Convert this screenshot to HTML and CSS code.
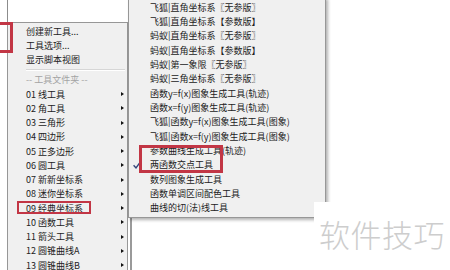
FILE: index.html
```html
<!DOCTYPE html>
<html lang="zh-CN">
<head>
  <meta charset="UTF-8">
  <title>工具菜单</title>
  <link rel="stylesheet" href="styles.css">
</head>
<body>
  <div class="desk">
    <!-- windows behind the menus -->
    <div class="backwin back-left"></div>
    <div class="backwin back-bottom"></div>

    <div class="menu menu-main">
      <div class="item">创建新工具...</div>
      <div class="item">工具选项...</div>
      <div class="item">显示脚本视图</div>
      <div class="sep"></div>
      <div class="item disabled">-- 工具文件夹 --</div>
      <div class="item">01 线工具<span class="arrow"></span></div>
      <div class="item">02 角工具<span class="arrow"></span></div>
      <div class="item">03 三角形<span class="arrow"></span></div>
      <div class="item">04 四边形<span class="arrow"></span></div>
      <div class="item">05 正多边形<span class="arrow"></span></div>
      <div class="item">06 圆工具<span class="arrow"></span></div>
      <div class="item">07 新新坐标系<span class="arrow"></span></div>
      <div class="item">08 迷你坐标系<span class="arrow"></span></div>
      <div class="item">09 经典坐标系<span class="arrow"></span></div>
      <div class="item">10 函数工具<span class="arrow"></span></div>
      <div class="item">11 箭头工具<span class="arrow"></span></div>
      <div class="item">12 圆锥曲线A<span class="arrow"></span></div>
      <div class="item">13 圆锥曲线B<span class="arrow"></span></div>
    </div>

    <div class="menu menu-sub">
      <div class="item">飞狐|直角坐标系〖无参版〗</div>
      <div class="item">飞狐|直角坐标系【参数版】</div>
      <div class="item">蚂蚁|直角坐标系〖无参版〗</div>
      <div class="item">蚂蚁|直角坐标系【参数版】</div>
      <div class="item">蚂蚁|第一象限〖无参版〗</div>
      <div class="item">蚂蚁|三角坐标系〖无参版〗</div>
      <div class="item">函数y=f(x)图象生成工具(轨迹)</div>
      <div class="item">函数x=f(y)图象生成工具(轨迹)</div>
      <div class="item">飞狐|函数y=f(x)图象生成工具(图象)</div>
      <div class="item">飞狐|函数x=f(y)图象生成工具(图象)</div>
      <div class="item">参数曲线生成工具(轨迹)</div>
      <div class="item checked">
        <svg class="check" width="8" height="8" viewBox="0 0 8 8">
          <path d="M0.6 4.2 L3 6.9 L7.4 0.8" fill="none" stroke="#34457a" stroke-width="1.4"/>
        </svg>两函数交点工具
      </div>
      <div class="item">数列图象生成工具</div>
      <div class="item">函数单调区间配色工具</div>
      <div class="item">曲线的切(法)线工具</div>
    </div>

    <!-- red highlight boxes -->
    <div class="mark mark-edge"></div>
    <div class="mark mark-coord"></div>
    <div class="mark mark-cross"></div>

    <div class="watermark">软件技巧</div>
  </div>
</body>
</html>
```

FILE: styles.css
```css
* {
  margin: 0;
  padding: 0;
  box-sizing: border-box;
}

body {
  background: #fff;
  font-family: "Noto Sans CJK SC", "Noto Sans", sans-serif;
  color: #222;
}

.desk {
  position: relative;
  width: 450px;
  height: 270px;
  overflow: hidden;
  background: #fff;
}

.backwin {
  position: absolute;
  background: #fff;
}

.back-left {
  left: 0;
  top: 0;
  width: 8px;
  height: 270px;
  border-right: 1px solid #8c8c8c;
}

.back-bottom {
  left: 130px;
  top: 200px;
  right: 0;
  bottom: 0;
  border-left: 2px solid #9a9a9a;
}

.menu {
  position: absolute;
  background: #f0f0f0;
  border: 1px solid #979797;
}

.menu-main {
  left: 7px;
  top: 22px;
  width: 121px;
  height: 260px;
  padding-top: 1px;
}

.menu-sub {
  left: 128px;
  top: -3px;
  width: 198px;
  padding: 2px 0;
  box-shadow: 2px 2px 3px rgba(0, 0, 0, 0.3);
}

.item {
  display: flex;
  align-items: center;
  height: 14.25px;
  font-size: 9px;
  line-height: 1;
  white-space: nowrap;
}

.menu-main .item {
  padding-left: 18px;
  padding-right: 3px;
}

.menu-sub .item {
  height: 14.35px;
  padding-left: 21px;
}

.menu-sub .item.checked {
  padding-left: 4px;
}

.check {
  margin-right: 9px;
}

.item.disabled {
  color: #a3a3a3;
}

.arrow {
  margin-left: auto;
  width: 0;
  height: 0;
  border-left: 3px solid #111;
  border-top: 2.5px solid transparent;
  border-bottom: 2.5px solid transparent;
}

.sep {
  height: 2px;
  margin: 2px 2px 2px 18px;
  border-top: 1px solid #d6d6d6;
  border-bottom: 1px solid #fff;
}

.mark {
  position: absolute;
  border: 3px solid #c23645;
}

.mark-edge {
  left: -4px;
  top: 22px;
  width: 17px;
  height: 31px;
}

.mark-coord {
  left: 17px;
  top: 201px;
  width: 74px;
  height: 13px;
  border-width: 2px;
}

.mark-cross {
  left: 139px;
  top: 145px;
  width: 84px;
  height: 28px;
}

.watermark {
  position: absolute;
  left: 314px;
  top: 202px;
  right: 0;
  bottom: 0;
  background: #fff;
  padding: 16px 0 0 5px;
  font-size: 31px;
  line-height: 1;
  font-weight: 300;
  color: #cdcdcd;
  letter-spacing: 0.5px;
}
```
